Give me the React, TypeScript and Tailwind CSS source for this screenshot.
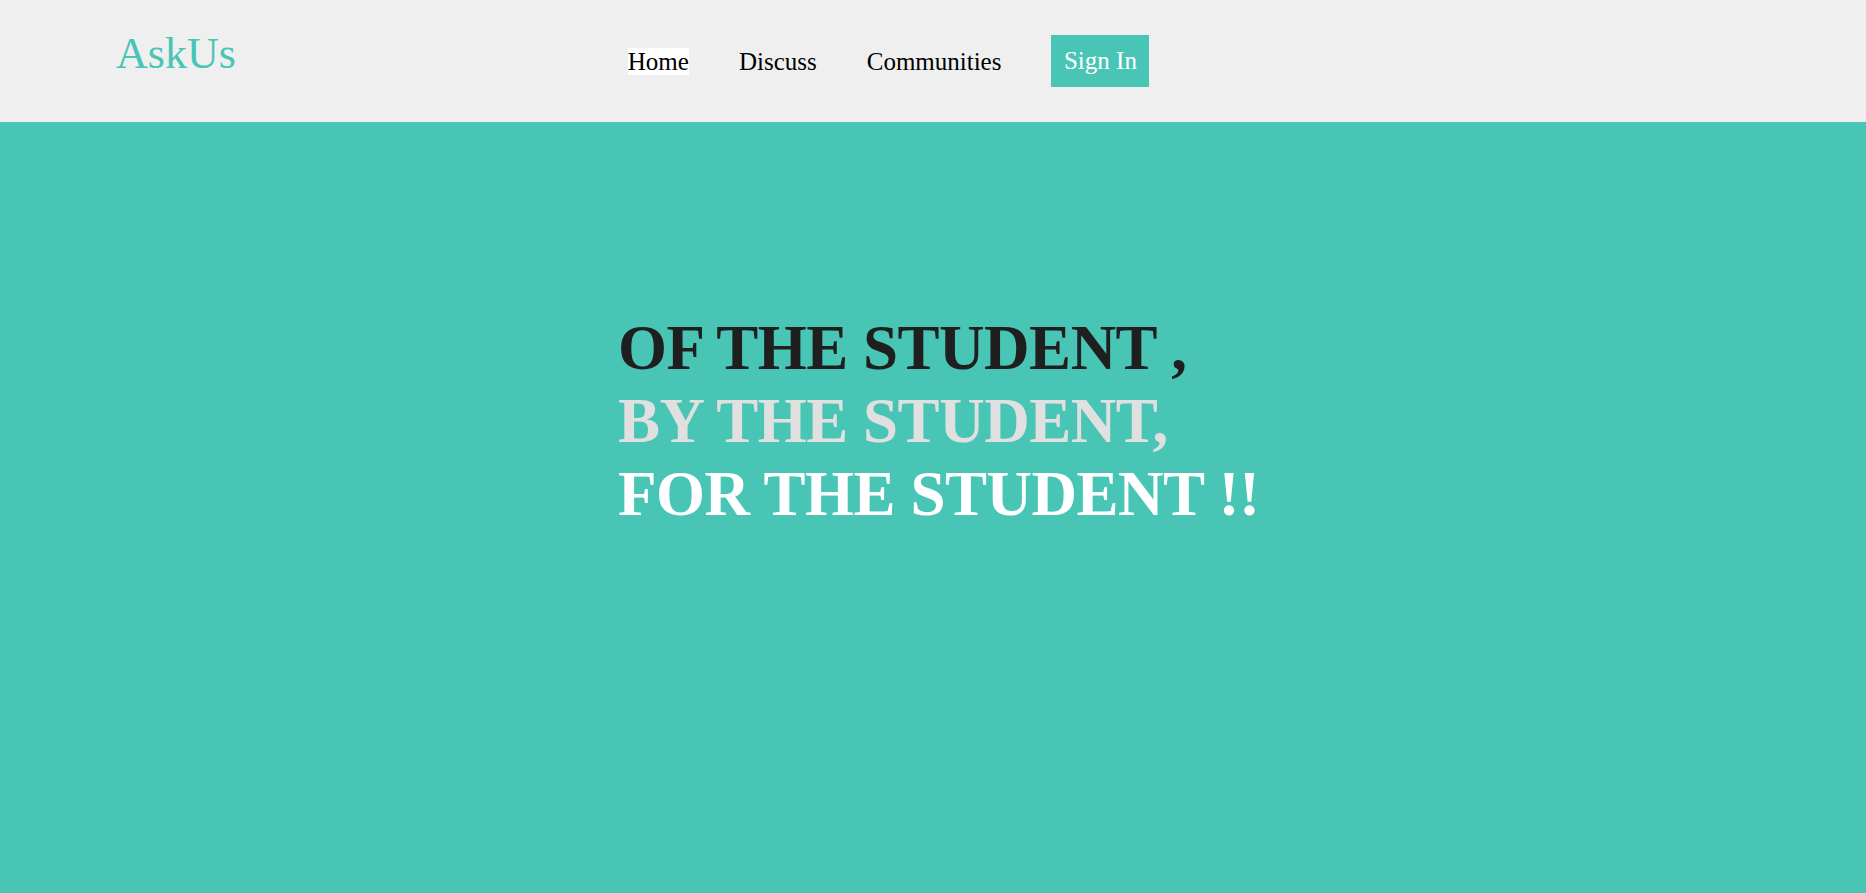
import React from "react";

export default function App() {
  return (
    <div className="w-full min-h-[893px] flex flex-col bg-[#49c5b6]" style={{ fontFamily: '"Liberation Serif", "Times New Roman", serif' }}>
      <header className="h-[122px] bg-[#efefef] flex items-center pl-[116px]">
        <div className="text-[44px] leading-none text-[#49c5b6] -mt-[14px]">AskUs</div>
        <nav className="ml-[392px] flex items-center gap-[50px] text-[25px] text-black">
          <a className="bg-white leading-[27px]">Home</a>
          <a className="leading-[27px]">Discuss</a>
          <a className="leading-[27px]">Communities</a>
          <button className="bg-[#49c5b6] text-white h-[52px] w-[98px] text-[25px] flex items-center justify-center">Sign In</button>
        </nav>
      </header>
      <main className="flex-1 pt-[190px] pl-[618px]">
        <h1 className="text-[63px] font-bold leading-[73px] tracking-[-0.5px]">
          <div className="text-[#1f1f1f]">OF THE STUDENT ,</div>
          <div className="text-[#e0e0e0]">BY THE STUDENT,</div>
          <div className="text-white">FOR THE STUDENT !!</div>
        </h1>
      </main>
    </div>
  );
}
